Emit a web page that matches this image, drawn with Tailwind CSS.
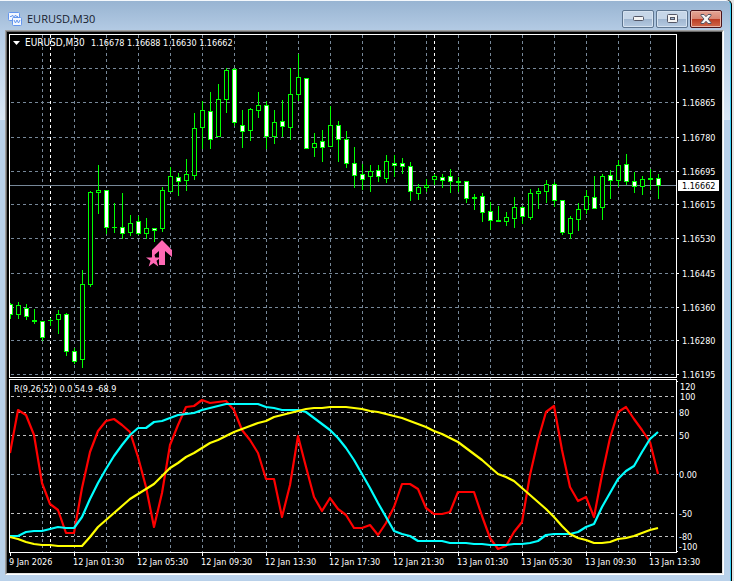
<!DOCTYPE html>
<html lang="en">
<head>
    <meta charset="UTF-8">
    <meta name="viewport" content="width=device-width, initial-scale=1.0">
    <title>EURUSD,M30</title>
    <script src="https://cdn.jsdelivr.net/npm/@tailwindcss/browser@4"></script>
</head>
<body class="min-h-screen bg-[#e4e4e4]">
    <div class="mr-[2px] min-h-screen rounded-tr-[5px] border-r border-black bg-black">
        <div class="flex min-h-screen flex-col rounded-tr-[5px] border-t border-r border-t-[#f4f8fc] border-r-[#3fd0f5] bg-[linear-gradient(to_bottom,#98b4d2_0px,#b4cbe4_30px,#dae7f5_119px,#b9d1ea_119px)] pr-[6px] pb-[6px] pl-[5px]">
            <header class="flex h-[29px] items-center justify-between pt-[6px] pr-[2px] pl-[3px]">
                <div class="flex items-center gap-[5px]">
                    <svg class="size-[14px]" viewBox="0 0 14 14" aria-hidden="true">
                        <rect x="0.5" y="0.5" width="11" height="8" rx="1" fill="#f4f8ff" stroke="#6496ee"/>
                        <path d="M2 4.500h1.500l1-1.500 1.500 3 1.500-3 1 1.500h1.500" fill="none" stroke="#6496ee"/>
                        <rect x="4.5" y="5.5" width="9" height="8" rx="1" fill="#f4f8ff" stroke="#6496ee"/>
                        <path d="M6 8l1.500 3 1.500-3 1.500 3 1.500-3" fill="none" stroke="#6496ee"/>
                    </svg>
                    <h1 class="font-['Open_Sans',sans-serif] text-[11px] leading-4 text-[#16202e]">EURUSD,M30</h1>
                </div>
                <div class="flex gap-[2px]">
                    <button type="button" aria-label="Minimize" class="flex h-[18px] w-8 items-center justify-center rounded-[2px] border border-[#5d7590] bg-[linear-gradient(to_bottom,#c6d6e8_50%,#9fb6d0_50%,#b5cae1)] shadow-[inset_0_0_0_1px_#d5e2f0]">
                        <svg class="h-[5px] w-[11px]" viewBox="0 0 11 5" aria-hidden="true">
                            <rect x="0.5" y="0.5" width="10" height="4" rx="1" fill="#f4f4f4" stroke="#535666"/>
                        </svg>
                    </button>
                    <button type="button" aria-label="Maximize" class="flex h-[18px] w-8 items-center justify-center rounded-[2px] border border-[#5d7590] bg-[linear-gradient(to_bottom,#c6d6e8_50%,#9fb6d0_50%,#b5cae1)] shadow-[inset_0_0_0_1px_#d5e2f0]">
                        <svg class="h-[9px] w-[11px]" viewBox="0 0 11 9" aria-hidden="true">
                            <rect x="0.5" y="0.5" width="10" height="8" rx="1" fill="#f4f4f4" stroke="#535666"/>
                            <rect x="3.5" y="3.5" width="4" height="2" fill="#9fb6d0" stroke="#535666"/>
                        </svg>
                    </button>
                    <button type="button" aria-label="Close" class="flex h-[18px] w-8 items-center justify-center rounded-[2px] border border-[#4a1219] bg-[linear-gradient(to_bottom,#e5a596,#d98573_50%,#bb3a22_50%,#d0694c)] shadow-[inset_0_0_0_1px_#e9b5a8]">
                        <svg class="h-[10px] w-[12px]" viewBox="0 0 12 10" aria-hidden="true">
                            <path d="M1 .5h3l2 2.200 2-2.200h3v1L8 5l3 3.500v1H8L6 7.300 4 9.500H1v-1L4 5 1 1.500z" fill="#f6f6f6" stroke="#535666"/>
                        </svg>
                    </button>
                </div>
            </header>
            <main class="border border-t-[#a0a0a0] border-r-white border-b-white border-l-[#a0a0a0]">
                <div class="border border-t-[#696969] border-r-[#e3e3e3] border-b-[#e3e3e3] border-l-[#696969] bg-black">
                    <svg id="chart" class="block h-auto w-full font-['DejaVu_Sans_Condensed','Open_Sans',sans-serif] text-[9px]" viewBox="7 32 715 541" role="img" aria-label="EURUSD M30 candlestick chart with R indicator"></svg>
                </div>
            </main>
        </div>
    </div>
    <script>
        const chart = document.getElementById('chart');
        const GRID = '#778899';
        const LEVEL = '#c0c0c0';
        const GREEN = '#00ff00';

        // high, body top, body bottom, low, kind (w = down, b = up, d = doji)
        const candles = [
            [303, 304, 315, 319, 'w'], [302, 305, 315, 319, 'b'], [304, 308, 317, 320, 'w'], [309, 320, 322, 324, 'd'],
            [321, 321, 338, 341, 'w'], [318, 320, 321, 326, 'd'], [310, 314, 320, 334, 'b'], [313, 314, 352, 356, 'w'],
            [348, 351, 362, 364, 'w'], [270, 284, 360, 368, 'b'], [191, 192, 285, 287, 'b'], [165, 190, 193, 214, 'b'],
            [190, 190, 228, 234, 'w'], [203, 227, 228, 233, 'd'], [193, 227, 234, 239, 'w'], [215, 223, 233, 236, 'b'],
            [216, 221, 234, 235, 'w'], [218, 228, 234, 239, 'b'], [228, 228, 231, 242, 'w'], [187, 190, 229, 232, 'b'],
            [167, 176, 192, 192, 'b'], [173, 177, 182, 196, 'w'], [159, 174, 181, 191, 'b'], [113, 128, 176, 180, 'b'],
            [101, 110, 128, 149, 'b'], [92, 111, 140, 149, 'w'], [84, 99, 137, 137, 'b'], [68, 70, 100, 113, 'b'],
            [68, 69, 123, 126, 'w'], [110, 125, 132, 148, 'w'], [108, 109, 131, 141, 'b'], [92, 105, 111, 118, 'b'],
            [101, 105, 137, 149, 'w'], [110, 122, 137, 144, 'b'], [100, 121, 127, 137, 'w'], [68, 94, 128, 140, 'b'],
            [54, 77, 95, 101, 'b'], [78, 78, 149, 149, 'w'], [133, 143, 148, 157, 'b'], [130, 141, 148, 162, 'w'],
            [106, 125, 147, 147, 'b'], [121, 125, 140, 162, 'w'], [131, 139, 164, 168, 'w'], [147, 163, 176, 188, 'w'],
            [164, 174, 180, 190, 'w'], [165, 171, 177, 192, 'b'], [165, 170, 177, 182, 'w'], [155, 161, 179, 183, 'b'],
            [155, 163, 166, 177, 'w'], [158, 163, 167, 174, 'w'], [162, 166, 192, 201, 'w'], [184, 187, 194, 200, 'b'],
            [179, 185, 188, 192, 'b'], [174, 176, 180, 185, 'b'], [174, 177, 181, 188, 'w'], [169, 176, 182, 193, 'w'],
            [177, 181, 183, 192, 'd'], [181, 181, 199, 203, 'w'], [194, 197, 199, 210, 'd'], [193, 196, 213, 222, 'w'],
            [202, 211, 221, 230, 'w'], [206, 220, 222, 222, 'd'], [212, 217, 222, 226, 'b'], [197, 207, 219, 228, 'b'],
            [206, 207, 217, 224, 'w'], [189, 193, 218, 220, 'b'], [188, 191, 194, 209, 'b'], [180, 184, 192, 203, 'b'],
            [182, 184, 201, 207, 'w'], [200, 200, 233, 235, 'w'], [216, 218, 234, 239, 'b'], [203, 209, 220, 231, 'b'],
            [190, 196, 210, 214, 'b'], [176, 197, 209, 209, 'w'], [174, 176, 208, 220, 'b'], [170, 175, 181, 199, 'w'],
            [160, 165, 181, 187, 'b'], [154, 164, 182, 185, 'w'], [172, 181, 187, 193, 'w'], [176, 179, 187, 195, 'b'],
            [169, 178, 180, 190, 'd'], [174, 178, 186, 199, 'w'],
        ];

        // indicator buffers, one value per bar
        const red = [453, 410, 415, 435, 483, 504, 510, 533, 533, 488, 452, 431, 421, 419, 425, 432, 457, 487, 527, 493,
            445, 425, 407, 406, 400, 403, 402, 401, 410, 430, 440, 453, 479, 479, 517, 485, 436, 467, 497, 511,
            498, 509, 515, 528, 528, 525, 535, 523, 507, 484, 484, 489, 508, 514, 514, 512, 492, 492, 492, 516,
            538, 549, 546, 532, 522, 475, 440, 412, 406, 450, 487, 501, 497, 517, 475, 438, 412, 407, 419, 430, 442, 474];
        const cyan = [536, 536, 532, 531, 531, 529, 527, 528, 528, 517, 499, 483, 469, 456, 445, 435, 428, 428, 422, 421,
            418, 415, 414, 413, 410, 408, 406, 404, 404, 404, 404, 404, 407, 408, 410, 410, 410, 412, 418, 424,
            430, 438, 448, 460, 474, 488, 503, 517, 531, 534, 536, 541, 541, 541, 541, 543, 543, 543, 544, 544,
            545, 545, 545, 544, 544, 543, 541, 535, 534, 534, 534, 532, 527, 524, 507, 493, 479, 471, 466, 452, 439, 432];
        const yellow = [537, 539, 542, 544, 545, 545, 546, 546, 546, 546, 537, 527, 520, 513, 506, 499, 494, 489, 484, 476,
            468, 463, 457, 453, 448, 443, 440, 436, 432, 429, 426, 423, 421, 417, 415, 413, 411, 409, 408, 408,
            407, 407, 407, 408, 409, 411, 412, 414, 416, 418, 421, 424, 427, 431, 434, 438, 442, 448, 454, 460,
            467, 474, 477, 481, 488, 495, 502, 509, 517, 526, 534, 538, 540, 543, 543, 542, 539, 538, 536, 533, 530, 528];

        const prices = [[68, '1.16950'], [102, '1.16865'], [137, '1.16780'], [171, '1.16695'], [204, '1.16615'],
            [238, '1.16530'], [273, '1.16445'], [307, '1.16360'], [340, '1.16280'], [374, '1.16195']];
        const levels = [[396, '100'], [412, '80'], [435, '50'], [474, '0.00'], [513, '-50'], [536, '-80']];
        const times = ['9 Jan 2026', '12 Jan 01:30', '12 Jan 05:30', '12 Jan 09:30', '12 Jan 13:30', '12 Jan 17:30',
            '12 Jan 21:30', '13 Jan 01:30', '13 Jan 05:30', '13 Jan 09:30', '13 Jan 13:30'];

        function add(name, attrs, text) {
            const el = document.createElementNS('http://www.w3.org/2000/svg', name);
            for (const key in attrs) el.setAttribute(key, attrs[key]);
            if (text) el.textContent = text;
            chart.appendChild(el);
        }

        function rect(x, y, width, height, fill) {
            add('rect', { x, y, width, height, fill, 'shape-rendering': 'crispEdges' });
        }

        function dashed(x1, y1, x2, y2, stroke) {
            add('path', { d: `M${x1} ${y1}L${x2} ${y2}`, stroke, 'stroke-dasharray': '3 3', 'shape-rendering': 'crispEdges' });
        }

        function label(x, y, text, fill = '#fff') {
            add('text', { x, y, fill }, text);
        }

        function series(values, stroke) {
            const points = values.map((y, i) => `${10 + i * 8},${y}`).join(' ');
            add('polyline', { points, stroke, fill: 'none', 'stroke-width': 2.2, 'stroke-linejoin': 'round' });
        }

        // grid
        for (let x = 42; x < 676; x += 32) dashed(x + 0.5, 35, x + 0.5, 552, GRID);
        prices.forEach(([y]) => dashed(11, y + 0.5, 676, y + 0.5, GRID));
        levels.forEach(([y, text]) => dashed(11, y + 0.5, 676, y + 0.5, text === '0.00' ? GRID : LEVEL));
        [50, 434].forEach(x => dashed(x + 0.5, 35, x + 0.5, 552, '#fff'));
        rect(10, 185, 667, 1, GRID);

        // candles
        candles.forEach(([high, top, bottom, low, kind], i) => {
            const x = 10 + i * 8;
            const left = Math.max(x - 2, 10);
            rect(x, high, 1, low - high, GREEN);
            rect(left, top, x + 3 - left, bottom - top, GREEN);
            if (kind !== 'd') {
                const inner = Math.max(x - 1, 10);
                rect(inner, top + 1, x + 2 - inner, bottom - top - 2, kind === 'w' ? '#fff' : '#000');
            }
        });

        // buy signal
        add('path', { d: 'M162 240L172 250V257L165 251V265H159V251L152 257V250Z', fill: '#ff69b4' });
        add('path', { d: 'M153.500 252L155.300 257.500H161L156.500 260.800L158.300 266.500L153.500 263L148.700 266.500L150.500 260.800L146 257.500H151.700Z', fill: '#ff69b4' });

        series(red, '#ff0000');
        series(cyan, '#00ffff');
        series(yellow, '#ffff00');

        // panel frames
        rect(9, 34, 668, 1, '#fff');
        rect(9, 377, 668, 1, '#fff');
        rect(9, 34, 1, 344, '#fff');
        rect(676, 34, 1, 344, '#fff');
        rect(9, 379, 668, 1, '#fff');
        rect(9, 552, 668, 1, '#fff');
        rect(9, 379, 1, 174, '#fff');
        rect(676, 379, 1, 174, '#fff');

        // axes
        prices.forEach(([y, text]) => {
            rect(677, y, 2, 1, '#fff');
            label(682, y + 4, text);
        });
        rect(678, 180, 41, 11, '#fff');
        label(682, 189, '1.16662', '#000');
        levels.forEach(([y, text]) => label(text === '100' ? 680 : 679, y + 4, text));
        [381, 474, 551].forEach(y => rect(677, y, 1, 1, '#fff'));
        label(680, 390, '120');
        label(679, 550, '-100');
        times.forEach((text, i) => {
            rect(10 + i * 64, 553, 1, 3, '#fff');
            label(9 + i * 64, 565, text);
        });

        // captions
        add('path', { d: 'M13 41H20L16.500 45Z', fill: '#fff' });
        add('text', { x: 25, y: 46, fill: '#fff', class: 'text-[10px]' }, 'EURUSD,M30');
        label(91, 46, '1.16678 1.16688 1.16630 1.16662');
        label(14, 392, 'R(9,26,52) 0.0 54.9 -68.9');
    </script>
</body>
</html>
